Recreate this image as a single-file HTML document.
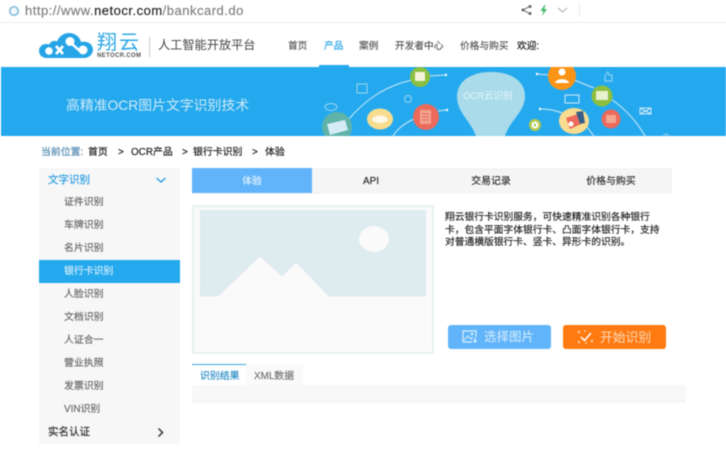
<!DOCTYPE html>
<html lang="zh">
<head>
<meta charset="utf-8">
<title>bankcard</title>
<style>
html,body{margin:0;padding:0;background:#fff}
body{width:726px;height:450px;overflow:hidden;position:relative;font-family:"Liberation Sans","Noto Sans CJK SC",sans-serif}
#w{position:absolute;left:0;top:0;width:726px;height:450px;overflow:hidden;filter:blur(.45px)}
.a{position:absolute;white-space:nowrap}
.nav{top:41px;font-size:9.700px;line-height:12px;color:#555;-webkit-text-stroke:.15px}
.bc{top:147px;font-size:9.900px;line-height:12px;color:#222;-webkit-text-stroke:.2px}
.si{left:64px;font-size:9.900px;line-height:12px;color:#666;-webkit-text-stroke:.15px}
.tab{top:168px;width:120px;height:26px;line-height:28px;text-align:center;font-size:9.900px;color:#333;-webkit-text-stroke:.2px}
</style>
</head>
<body>
<div id="w">
  <!-- address bar -->
  <svg class="a" style="left:8px;top:5px" width="12" height="12" viewBox="0 0 12 12"><circle cx="6" cy="6" r="4.300" fill="#eef7fb" stroke="#7fb9d6" stroke-width="1.500"/></svg>
  <div class="a" style="left:25px;top:3px;font-size:13px;line-height:15px;color:#7d7d7d;letter-spacing:.5px;-webkit-text-stroke:.15px">http://www.<span style="color:#222">netocr.com</span>/bankcard.do</div>
  <svg class="a" style="left:520px;top:4px" width="50" height="13" viewBox="0 0 50 13">
    <path d="M9.500 2.500 3 6l6.500 3.500" fill="none" stroke="#777" stroke-width="1"/><circle cx="10" cy="2.500" r="1.500" fill="#666"/><circle cx="3" cy="6" r="1.500" fill="#666"/><circle cx="10" cy="9.500" r="1.500" fill="#666"/>
    <path d="M24.500 1 20.500 7h3l-1.500 5 5-7h-3l1.500-4z" fill="#3fb968"/>
    <path d="M38 4l4.500 4L47 4" fill="none" stroke="#aaa" stroke-width="1"/>
  </svg>
  <div class="a" style="left:579px;top:3px;width:1px;height:14px;background:#e8e8e8"></div>
  <div class="a" style="left:0;top:22px;width:726px;height:1px;background:#ececec"></div>

  <!-- logo -->
  <svg class="a" style="left:38px;top:32px" width="56" height="27" viewBox="0 0 56 27">
    <path d="M9 26C3.500 26 1 22.500 1 19c0-4 3-7 7-7 1 0 2 .2 3 .6C13 9 16 8 19 9.500 21 4 26 1 31 1c6 0 11 4 12 9 1-.3 2-.4 3-.4 5 0 9 3.500 9 8s-4 8.400-9 8.400z" fill="#25a5e6"/>
    <circle cx="11" cy="19" r="3.800" fill="#fff"/><circle cx="32" cy="9.500" r="4.500" fill="#fff"/><circle cx="45" cy="18" r="4.500" fill="#fff"/>
    <path d="M18 14l7 8M25 14l-7 8" stroke="#fff" stroke-width="2.800"/><path d="M34 12l9 8" stroke="#fff" stroke-width="2.500"/>
  </svg>
  <div class="a" style="left:97px;top:33px;font-size:20px;line-height:20px;color:#2fa8e6;letter-spacing:2px">翔云</div>
  <div class="a" style="left:97px;top:53px;font-size:6px;line-height:7px;color:#555;letter-spacing:.35px;font-weight:bold">NETOCR.COM</div>
  <div class="a" style="left:149px;top:37px;width:1px;height:20px;background:#ccc"></div>
  <div class="a" style="left:158px;top:38px;font-size:12.200px;line-height:14px;color:#444">人工智能开放平台</div>

  <!-- nav -->
  <div class="a nav" style="left:288px">首页</div>
  <div class="a nav" style="left:324px;color:#2aa6e6">产品</div>
  <div class="a nav" style="left:359px">案例</div>
  <div class="a nav" style="left:395px">开发者中心</div>
  <div class="a nav" style="left:460px">价格与购买</div>
  <div class="a nav" style="left:517px;color:#111">欢迎:</div>
  <div class="a" style="left:319px;top:65px;width:30px;height:2px;background:#25a9ee"></div>

  <!-- banner -->
  <div class="a" style="left:1px;top:67px;width:725px;height:69px;background:#25a9ee"></div>
  <div class="a" style="left:66px;top:97px;font-size:13.850px;line-height:16px;color:#cfeaf6">高精准OCR图片文字识别技术</div>
  <svg class="a" style="left:300px;top:67px" width="426" height="69" viewBox="300 67 426 69">
    <g fill="none" stroke="#cfeaf6" stroke-width="1">
      <path d="M348 120C365 100 385 86 412 80"/><path d="M428 76 445 75"/>
      <path d="M393 136C398 128 405 123 414 119"/><path d="M438 111 446 110"/>
      <path d="M537 74 550 75"/><path d="M574 80 594 88"/><path d="M611 99C627 110 637 122 645 136"/>
      <path d="M540 109C548 109 555 110 562 113"/><path d="M587 127 594 136"/>
    </g>
    <g fill="#fff"><circle cx="446" cy="75" r="1.200"/><circle cx="447" cy="110" r="1.200"/><circle cx="537" cy="74" r="1.200"/><circle cx="540" cy="109" r="1.200"/></g>
    <path d="M491 72C471 72 457 81 457 97C457 112 470 120 476 136H505C510 120 525 112 525 96C525 81 511 72 491 72Z" fill="#a9dbeb"/>
    <circle cx="420" cy="77" r="10" fill="#8cbf3f"/><rect x="415" y="72" width="10" height="9" rx="1" fill="#f2f3d8"/>
    <circle cx="562" cy="76" r="14" fill="#fb9416"/><circle cx="562" cy="72" r="3.500" fill="#fff"/><path d="M555 83c1-5 13-5 14 0z" fill="#fff"/>
    <circle cx="602" cy="96" r="10.500" fill="#8cbf3f"/><rect x="596" y="91" width="12" height="9" fill="#e8f0d0"/>
    <circle cx="426" cy="117" r="13" fill="#ec6a5c"/><rect x="420" y="110" width="11" height="14" fill="#f3a18f"/><path d="M422 114h7M422 117h7M422 120h7" stroke="#ec6a5c"/>
    <ellipse cx="380" cy="119" rx="13" ry="10.500" fill="#f8dc90"/><path d="M372 120c1-6 14-6 16 0-4 4-12 4-16 0z" fill="#fff" opacity=".8"/>
    <circle cx="337" cy="127" r="15" fill="#5fb3a8"/><path d="M327 124l18-4 3 10-18 5z" fill="#d5ecf4"/>
    <ellipse cx="574" cy="121" rx="15" ry="13" fill="#f8dc90"/><path d="M566 118l12-4 3 10-11 5z" fill="#ec6a5c"/><path d="M576 112l7-1 2 12-5 1z" fill="#355f86"/><circle cx="571" cy="124" r="2.500" fill="#fff"/>
    <circle cx="611" cy="119" r="9.500" fill="#ec6a5c"/><rect x="606" y="115" width="10" height="8" fill="#f4a692"/>
    <circle cx="535" cy="125" r="6" fill="#b8c84a"/><circle cx="535" cy="125" r="3.500" fill="#fff"/><path d="M534 123l2.500 2-2.500 2z" fill="#8cbf3f"/>
    <g fill="none" stroke="#9ad5ee" stroke-width="1">
      <rect x="357" y="84" width="10" height="9"/>
      <ellipse cx="331" cy="107" rx="6" ry="3.500"/>
      <circle cx="408" cy="99" r="3.500"/>
      <rect x="565" y="95" width="14" height="8" stroke="#cfeaf6"/>
      <path d="M605 81v-5l3-4 1 3h3v6z"/>
      <rect x="640" y="108" width="11" height="6" stroke="#cfeaf6"/><path d="M640 108l11 6M651 108l-11 6" stroke="#cfeaf6"/>
      <circle cx="666" cy="136" r="2"/>
    </g>
    <text x="463" y="99" font-family="Liberation Sans,Noto Sans CJK SC,sans-serif" font-size="9.500" fill="#e8f6fb">OCR云识别</text>
  </svg>

  <!-- breadcrumb -->
  <div class="a bc" style="left:41px;color:#5b8fb4">当前位置:</div>
  <div class="a bc" style="left:88px">首页</div>
  <div class="a bc" style="left:118px">&gt;</div>
  <div class="a bc" style="left:131px">OCR产品</div>
  <div class="a bc" style="left:182px">&gt;</div>
  <div class="a bc" style="left:193px">银行卡识别</div>
  <div class="a bc" style="left:252px">&gt;</div>
  <div class="a bc" style="left:265px">体验</div>

  <!-- sidebar -->
  <div class="a" style="left:39px;top:168px;width:141px;height:276px;background:#f7f7f8"></div>
  <div class="a" style="left:48px;top:174px;font-size:10.500px;line-height:12px;color:#2f9fdf;-webkit-text-stroke:.2px">文字识别</div>
  <svg class="a" style="left:155px;top:177px" width="12" height="7" viewBox="0 0 12 7"><path d="M1.500 1 6 5l4.500-4" fill="none" stroke="#2f9fdf" stroke-width="1.500"/></svg>
  <div class="a si" style="top:197px">证件识别</div>
  <div class="a si" style="top:220px">车牌识别</div>
  <div class="a si" style="top:243px">名片识别</div>
  <div class="a" style="left:39px;top:260px;width:141px;height:23px;background:#25a9ee"></div>
  <div class="a si" style="top:266px;color:#d5eefa">银行卡识别</div>
  <div class="a si" style="top:289px">人脸识别</div>
  <div class="a si" style="top:312px">文档识别</div>
  <div class="a si" style="top:335px">人证合一</div>
  <div class="a si" style="top:358px">营业执照</div>
  <div class="a si" style="top:381px">发票识别</div>
  <div class="a si" style="top:404px">VIN识别</div>
  <div class="a" style="left:48px;top:426px;font-size:10.500px;line-height:12px;color:#333;-webkit-text-stroke:.2px">实名认证</div>
  <svg class="a" style="left:157px;top:427px" width="7" height="11" viewBox="0 0 7 11"><path d="M1.500 1.500 5.500 5.500l-4 4" fill="none" stroke="#333" stroke-width="1.500"/></svg>

  <!-- tabs -->
  <div class="a" style="left:192px;top:168px;width:480px;height:26px;background:#f5f5f5"></div>
  <div class="a tab" style="left:192px;height:25px;line-height:27px;background:#61b4fa;color:#d8eefc">体验</div>
  <div class="a tab" style="left:311px">API</div>
  <div class="a tab" style="left:431px">交易记录</div>
  <div class="a tab" style="left:551px">价格与购买</div>

  <!-- upload -->
  <div class="a" style="left:192px;top:205px;width:238px;height:145px;border:2px solid #e9f0f1;background:#fafafa"></div>
  <svg class="a" style="left:200px;top:210px" width="226" height="87" viewBox="200 210 226 87">
    <path d="M200 210H426V296H329L296 262 282 276 260 256 218 296H200Z" fill="#deecef" stroke="#d8e4f0" stroke-width=".6"/>
    <ellipse cx="374" cy="239" rx="15" ry="13" fill="#fafafa"/>
  </svg>

  <!-- description -->
  <div class="a" style="left:445px;top:212px;font-size:9.750px;line-height:12.500px;color:#222;-webkit-text-stroke:.15px">翔云银行卡识别服务&#xFF0C;可快速精准识别各种银行<br>卡&#xFF0C;包含平面字体银行卡、凸面字体银行卡&#xFF0C;支持<br>对普通横版银行卡、竖卡、异形卡的识别。</div>

  <!-- buttons -->
  <div class="a" style="left:448px;top:325px;width:103px;height:24px;background:#61b4fa;border-radius:3px"></div>
  <svg class="a" style="left:462px;top:329px" width="16" height="15" viewBox="0 0 16 15"><path d="M14 8V2H1v11h9" fill="none" stroke="#d8eefc" stroke-width="1.200"/><path d="M2 11l4-4 3 3 2-2" fill="none" stroke="#d8eefc"/><circle cx="10" cy="5" r="1.300" fill="#d8eefc"/><path d="M13 9v5M11 12h4" stroke="#d8eefc" stroke-width="1.200"/></svg>
  <div class="a" style="left:484px;top:330px;font-size:12.500px;line-height:15px;color:#d8eefc">选择图片</div>
  <div class="a" style="left:563px;top:325px;width:103px;height:24px;background:#ff7a10;border-radius:3px"></div>
  <svg class="a" style="left:576px;top:329px" width="19" height="16" viewBox="0 0 19 16"><path d="M5 8l3.500 3.500L15 4" fill="none" stroke="#fff" stroke-width="1.500"/><g fill="#fbc79a"><circle cx="3" cy="3" r="1.300"/><circle cx="16" cy="12" r="1.300"/><circle cx="3" cy="13" r="1.300"/><circle cx="9" cy="2" r="1"/><circle cx="10" cy="14" r="1"/></g></svg>
  <div class="a" style="left:600px;top:330px;font-size:12.800px;line-height:15px;color:#fbdcc0">开始识别</div>

  <!-- results -->
  <div class="a" style="left:192px;top:364px;width:111px;height:21px;background:#fafafa"></div>
  <div class="a" style="left:192px;top:364px;width:54px;height:21px;background:#fff;border-top:1px solid #38a9dc;box-sizing:border-box"></div>
  <div class="a" style="left:200px;top:371px;font-size:9.900px;line-height:12px;color:#2f8fc9;-webkit-text-stroke:.2px">识别结果</div>
  <div class="a" style="left:254px;top:371px;font-size:9.900px;line-height:12px;color:#777;-webkit-text-stroke:.2px">XML数据</div>
  <div class="a" style="left:192px;top:385px;width:494px;height:17px;background:#f8f8f8;border-bottom:1px solid #f0f0f0;box-sizing:border-box"></div>
</div>
</body>
</html>
